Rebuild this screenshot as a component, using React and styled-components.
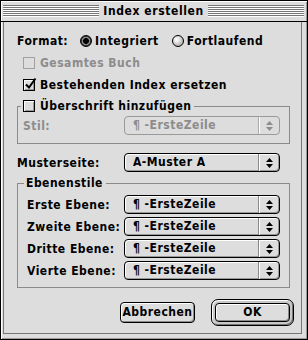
import React from 'react';
import styled, { createGlobalStyle } from 'styled-components';

const Global = createGlobalStyle`
  html, body { margin: 0; padding: 0; background: #fff; }
  #root { width: 308px; height: 340px; }
`;

const Window = styled.div`
  width: 308px;
  height: 340px;
  box-sizing: border-box;
  border: 1px solid #000;
  background: #dddddd;
  display: flex;
  flex-direction: column;
  font-family: "DejaVu Sans Condensed", "DejaVu Sans", sans-serif;
  font-stretch: condensed;
  font-weight: bold;
  font-size: 12px;
  letter-spacing: 0.5px;
  color: #000;
`;

const TitleBar = styled.div`
  height: 20px;
  flex: none;
  border-bottom: 1px solid #000;
  display: flex;
  align-items: center;
  gap: 4px;
  padding: 0 3px 0 2px;
  background: #dddddd;
  box-shadow: inset 1px 1px #fff, inset -1px 0 #999;
`;

const Stripes = styled.div`
  flex: 1;
  height: 12px;
  background: repeating-linear-gradient(to bottom, #777 0 1px, #fff 1px 2px);
`;

const Title = styled.div`
  line-height: 16px;
  letter-spacing: 0.6px;
`;

const Frame = styled.div`
  flex: 1;
  display: flex;
  padding: 0 5px 5px 2px;
  box-shadow: inset 1px 0 #fff, inset -1px -1px #999;
`;

const Content = styled.div`
  flex: 1;
  border: 1px solid #777;
  border-top: none;
  padding: 11px 7px 0 13px;
  display: flex;
  flex-direction: column;
`;

const Row = styled.div`
  display: flex;
  align-items: center;
  height: ${p => p.$h || 16}px;
  margin-top: ${p => p.$mt || 0}px;
  padding-left: ${p => p.$pl || 0}px;
  padding-right: ${p => p.$pr || 0}px;
  justify-content: ${p => (p.$split ? 'space-between' : 'flex-start')};
  color: ${p => (p.$disabled ? '#8c8c8c' : '#000')};
`;

const Label = styled.span`
  display: inline-block;
  width: ${p => (p.$w ? `${p.$w}px` : 'auto')};
  white-space: nowrap;
  line-height: 16px;
`;

const Option = styled.span`
  display: inline-flex;
  align-items: center;
  gap: 3px;
  margin-right: 13px;
  white-space: nowrap;
`;

const Radio = styled.span`
  width: 12px;
  height: 12px;
  box-sizing: border-box;
  border-radius: 50%;
  border: 1px solid #000;
  background: ${p =>
    p.$on
      ? 'radial-gradient(circle at 50% 50%, #000 0 2.6px, #555 3px, #999 3.8px, #333 4.6px)'
      : 'radial-gradient(circle at 38% 35%, #fff 0, #e6e6e6 30%, #a8a8a8 80%, #888 100%)'};
`;

const CheckWrap = styled.span`
  display: inline-flex;
  align-items: center;
  gap: 5px;
  white-space: nowrap;
  color: ${p => (p.$disabled ? '#8c8c8c' : '#000')};
`;

const Box = styled.span`
  position: relative;
  width: 12px;
  height: 12px;
  box-sizing: border-box;
  border: 1px solid ${p => (p.$disabled ? '#a0a0a0' : '#000')};
  background: #dddddd;
  box-shadow: ${p => (p.$disabled ? 'none' : 'inset 1px 1px #fff, inset -1px -1px #9a9a9a')};
  flex: none;
`;

const Tick = styled.svg`
  position: absolute;
  left: 1px;
  top: -2px;
  overflow: visible;
`;

const Group = styled.fieldset`
  margin: ${p => p.$mt}px 4px 0 0;
  padding: ${p => p.$pt}px 9px ${p => p.$pb}px ${p => p.$pl}px;
  border: 1px solid #8a8a8a;
  min-width: 0;
  display: flex;
  flex-direction: column;
  gap: ${p => p.$gap || 0}px;
`;

const Legend = styled.legend`
  height: 16px;
  padding: 0 3px 0 2px;
  margin-left: ${p => p.$ml}px;
  display: flex;
  align-items: center;
  line-height: 16px;
`;

const Popup = styled.div`
  width: 156px;
  height: 19px;
  box-sizing: border-box;
  flex: none;
  border: 1px solid ${p => (p.$disabled ? '#9a9a9a' : '#000')};
  border-radius: 4px;
  background: #dddddd;
  box-shadow: ${p => (p.$disabled ? 'none' : 'inset 1px 1px #fff, inset -1px -1px #999')};
  display: flex;
  color: ${p => (p.$disabled ? '#8c8c8c' : '#000')};
`;

const PopupText = styled.span`
  flex: 1;
  padding-left: 8px;
  line-height: 17px;
  white-space: nowrap;
  overflow: hidden;
`;

const PopupArrow = styled.span`
  width: 20px;
  display: flex;
  align-items: center;
  justify-content: center;
  border-left: 1px solid ${p => (p.$disabled ? '#aaa' : '#888')};
  box-shadow: inset 1px 0 #fff;
`;

const ButtonRow = styled.div`
  display: flex;
  justify-content: flex-end;
  align-items: center;
  gap: 16px;
  margin-top: 11px;
`;

const Button = styled.button`
  width: 75px;
  height: ${p => p.$h || 21}px;
  box-sizing: border-box;
  border: 1px solid #000;
  border-radius: 4px;
  background: #dddddd;
  box-shadow: inset 1px 1px #fff, inset -1px -1px #8a8a8a;
  font: inherit;
  letter-spacing: inherit;
  color: #000;
  padding: 0;
  line-height: 17px;
`;

const DefaultRing = styled.div`
  width: 83px;
  height: 27px;
  box-sizing: border-box;
  border: 1px solid #000;
  border-radius: 7px;
  padding: 3px;
  background: #c8c8c8;
  box-shadow: inset 1px 1px #fff, inset -1px -1px #777;
  display: flex;
`;

const Arrows = ({ color }) => (
  <svg width="7" height="10" viewBox="0 0 7 10">
    <path d="M3.5 0 L7 4 H0 Z M0 6 H7 L3.5 10 Z" fill={color} />
  </svg>
);

const Check = ({ checked, disabled, children }) => (
  <CheckWrap $disabled={disabled}>
    <Box $disabled={disabled}>
      {checked && (
        <Tick width="12" height="12" viewBox="0 0 12 12">
          <path d="M1 6.5 L4 9.5 L10.5 0.5" fill="none" stroke="#000" strokeWidth="2" />
        </Tick>
      )}
    </Box>
    {children}
  </CheckWrap>
);

const Select = ({ value, disabled }) => (
  <Popup $disabled={disabled}>
    <PopupText>{value}</PopupText>
    <PopupArrow $disabled={disabled}>
      <Arrows color={disabled ? '#8c8c8c' : '#000'} />
    </PopupArrow>
  </Popup>
);

const levels = ['Erste Ebene:', 'Zweite Ebene:', 'Dritte Ebene:', 'Vierte Ebene:'];

export default function App() {
  return (
    <>
      <Global />
      <Window>
        <TitleBar>
          <Stripes />
          <Title>Index erstellen</Title>
          <Stripes />
        </TitleBar>
        <Frame>
          <Content>
            <Row>
              <Label $w={63}>Format:</Label>
              <Option><Radio $on />Integriert</Option>
              <Option><Radio />Fortlaufend</Option>
            </Row>
            <Row $mt={6} $pl={6}>
              <Check disabled>Gesamtes Buch</Check>
            </Row>
            <Row $mt={6} $pl={6}>
              <Check checked>Bestehenden Index ersetzen</Check>
            </Row>
            <Group $mt={5} $pt={2} $pb={8} $pl={5}>
              <Legend $ml={-2}>
                <Check>Überschrift hinzufügen</Check>
              </Legend>
              <Row $h={19} $split $disabled>
                <Label>Stil:</Label>
                <Select value="¶ -ErsteZeile" disabled />
              </Row>
            </Group>
            <Row $h={19} $mt={9} $pr={14} $split>
              <Label>Musterseite:</Label>
              <Select value="A-Muster A" />
            </Row>
            <Group $mt={3} $pt={4} $pb={7} $pl={9} $gap={3}>
              <Legend $ml={-3}>Ebenenstile</Legend>
              {levels.map(l => (
                <Row key={l} $h={19} $split>
                  <Label>{l}</Label>
                  <Select value="¶ -ErsteZeile" />
                </Row>
              ))}
            </Group>
            <ButtonRow>
              <Button>Abbrechen</Button>
              <DefaultRing>
                <Button $h={19}>OK</Button>
              </DefaultRing>
            </ButtonRow>
          </Content>
        </Frame>
      </Window>
    </>
  );
}
